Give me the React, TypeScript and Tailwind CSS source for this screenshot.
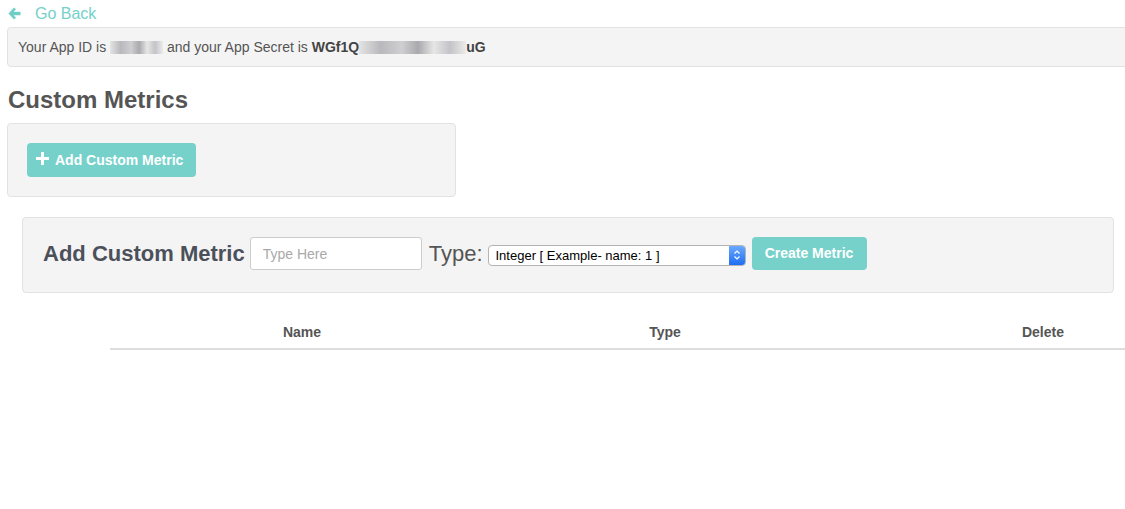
import React from "react";

const font = { fontFamily: '"Liberation Sans", Arial, sans-serif' };

const Blur: React.FC<{ w: number }> = ({ w }) => (
  <span
    className="inline-block h-[13px] align-[-2px] bg-[linear-gradient(90deg,#e4e4e4,#b9b9bd_20%,#cfcfd2_40%,#a9a9ae_55%,#e6e6e6_70%,#c4c4c8_85%,#ebebeb)]"
    style={{ width: w }}
  />
);

const App: React.FC = () => {
  return (
    <div className="w-[1125px] h-[509px] overflow-hidden bg-white text-[#555]" style={font}>
      {/* go back */}
      <div className="flex items-center h-[27px] pl-[8px]">
        <svg width="13" height="13" viewBox="0 0 13 13" className="text-[#6fcfc6]">
          <path d="M6 0.5 L0.5 6.5 L6 12.5 L8 10.5 L5.5 8.2 H12.5 V4.8 H5.5 L8 2.5 Z" fill="currentColor" />
        </svg>
        <a href="#" className="ml-[14px] text-[16px] font-light text-[#74d1c9] leading-none">
          Go Back
        </a>
      </div>

      {/* credentials */}
      <div className="ml-[7px] w-[1140px] h-[40px] flex items-center pl-[10px] bg-[#f4f4f4] border border-[#e2e2e2] rounded-[4px] text-[14px] text-[#555]">
        <span>Your App ID is&nbsp;</span>
        <Blur w={53} />
        <span>&nbsp;and your App Secret is&nbsp;</span>
        <b className="text-[#444]">WGf1Q</b>
        <Blur w={107} />
        <b className="text-[#444]">uG</b>
      </div>

      <h2 className="ml-[8px] mt-[20px] text-[24px] font-bold leading-[26px] text-[#555]">Custom Metrics</h2>

      <div className="ml-[7px] mt-[10px] w-[449px] h-[74px] p-[19px] bg-[#f4f4f4] border border-[#e2e2e2] rounded-[4px]">
        <button className="flex items-center h-[34px] w-[169px] pl-[9px] rounded-[4px] bg-[#76d1ca] text-white text-[14px] font-bold">
          <svg width="13" height="13" viewBox="0 0 13 13" className="mr-[6px] -mt-[3px]">
            <path d="M5 0 H8 V5 H13 V8 H8 V13 H5 V8 H0 V5 H5 Z" fill="white" />
          </svg>
          Add Custom Metric
        </button>
      </div>

      {/* add form */}
      <div className="ml-[22px] mt-[20px] w-[1092px] h-[76px] flex items-center pl-[20px] pb-[3px] bg-[#f4f4f4] border border-[#e2e2e2] rounded-[4px]">
        <span className="text-[22px] font-bold text-[#4b505a]">Add Custom Metric</span>
        <input
          placeholder="Type Here"
          className="ml-[5px] w-[172px] h-[33px] px-[12px] bg-white border border-[#ccc] rounded-[3px] text-[14px] placeholder:text-[#a9a9a9] outline-none"
          style={font}
        />
        <span className="ml-[7px] text-[22px] text-[#555]">Type:</span>
        <div className="ml-[5px] mt-[3px] w-[258px] h-[21px] flex bg-white border border-[#b4b4b4] rounded-[4px] overflow-hidden">
          <span className="flex-1 pl-[7px] text-[13px] leading-[19px] text-black">Integer [ Example- name: 1 ]</span>
          <span className="w-[16px] h-full flex items-center justify-center bg-[linear-gradient(#6aa9ff,#1f6ef3)]">
            <svg width="8" height="12" viewBox="0 0 8 12">
              <path d="M1.5 4.5 L4 2 L6.5 4.5 M1.5 7.5 L4 10 L6.5 7.5" fill="none" stroke="white" strokeWidth="1.2" />
            </svg>
          </span>
        </div>
        <button className="ml-[6px] w-[115px] h-[33px] rounded-[4px] bg-[#76d1ca] text-white text-[14px] font-bold">
          Create Metric
        </button>
      </div>

      {/* table */}
      <div className="ml-[110px] mt-[24px] w-[1030px] grid grid-cols-[384px_342px_1fr] h-[33px] items-center border-b-2 border-[#ddd] text-[14px] font-bold text-[#555]">
        <div className="text-center">Name</div>
        <div className="text-center">Type</div>
        <div className="text-right pr-[76px]">Delete</div>
      </div>
    </div>
  );
};

export default App;
